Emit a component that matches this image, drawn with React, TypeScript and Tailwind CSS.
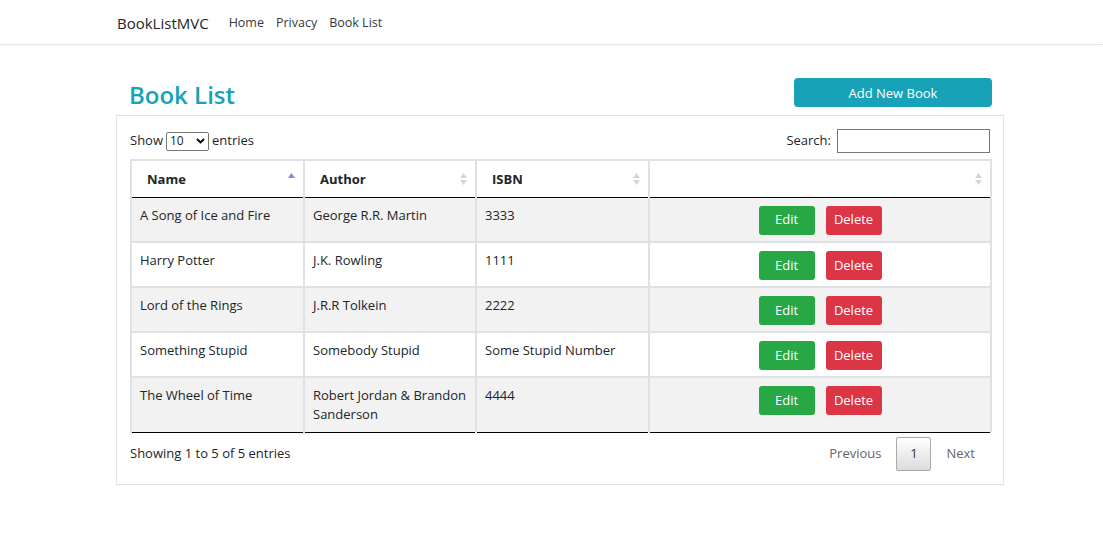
const books = [
  { name: "A Song of Ice and Fire", author: "George R.R. Martin", isbn: "3333" },
  { name: "Harry Potter", author: "J.K. Rowling", isbn: "1111" },
  { name: "Lord of the Rings", author: "J.R.R Tolkein", isbn: "2222" },
  { name: "Something Stupid", author: "Somebody Stupid", isbn: "Some Stupid Number" },
  { name: "The Wheel of Time", author: "Robert Jordan & Brandon Sanderson", isbn: "4444" },
];

const SortIcon = ({ active }: { active?: boolean }) => (
  <span className="absolute right-2 top-[12px] flex flex-col gap-[2px]">
    <svg width="7" height="5" viewBox="0 0 7 5">
      <path d="M3.5 0L7 5H0z" fill={active ? "#8a87d6" : "#d6d6d6"} />
    </svg>
    <svg width="7" height="5" viewBox="0 0 7 5">
      <path d="M0 0h7L3.5 5z" fill={active ? "transparent" : "#d6d6d6"} />
    </svg>
  </span>
);

const HeadCell = ({ label, active, className }: { label?: string; active?: boolean; className?: string }) => (
  <th className={`relative h-[37px] border-2 border-[#dee2e6] border-b-0 pl-[15px] pt-[2px] text-left font-bold text-[13px] text-[#212529] ${className ?? ""}`}>
    {label}
    <SortIcon active={active} />
  </th>
);

export default function App() {
  return (
    <div className="min-h-[557px] bg-white text-[13px] text-[#212529]" style={{ fontFamily: '"Open Sans", "Noto Sans", sans-serif' }}>
      <nav className="h-[45px] border-b border-[#e5e5e5] shadow-[0_1px_4px_rgba(0,0,0,0.06)]">
        <div className="ml-[116px] flex h-full w-[888px] items-center pt-[3px]">
          <span className="ml-[1px] mr-[20px] text-[15px] text-[#212529]">BookListMVC</span>
          <div className="flex gap-[12px] text-[12.5px] text-[#343a40]">
            <span>Home</span>
            <span>Privacy</span>
            <span>Book List</span>
          </div>
        </div>
      </nav>

      <div className="ml-[116px] w-[888px] pt-[33px]">
        <div className="flex items-end justify-between pl-3 pr-[12px]">
          <h2 className="pl-[1px] text-[24px] font-semibold leading-none text-[#17a2b8]">Book List</h2>
          <button className="h-[29px] w-[198px] rounded-[4px] bg-[#17a2b8] pt-[2px] text-[13px] text-white">Add New Book</button>
        </div>

        <div className="mt-[8px] border border-[#dee2e6] pb-[13px] pl-[13px] pr-[11px] pt-[13px]">
          <div className="flex items-center justify-between pr-[2px]">
            <div className="flex items-center gap-[3px]">
              <span>Show</span>
              <div className="flex h-[19px] w-[43px] items-center justify-between rounded-[2px] border border-[#767676] px-[3px] text-[12px]">
                <span>10</span>
                <svg width="9" height="6" viewBox="0 0 9 6">
                  <path d="M1 1l3.5 3.5L8 1" stroke="#000" strokeWidth="1.8" fill="none" />
                </svg>
              </div>
              <span>entries</span>
            </div>
            <div className="flex items-center gap-[6px]">
              <span>Search:</span>
              <div className="h-[24px] w-[153px] border border-[#767676]" />
            </div>
          </div>

          <table className="mt-[6px] w-full border-collapse">
            <thead>
              <tr className="border-b border-black">
                <HeadCell label="Name" active className="w-[173px]" />
                <HeadCell label="Author" className="w-[172px]" />
                <HeadCell label="ISBN" className="w-[173px]" />
                <HeadCell />
              </tr>
            </thead>
            <tbody>
              {books.map((b, i) => {
                const last = i === books.length - 1;
                const cell = `border-2 border-[#dee2e6] border-t-0 px-[8px] ${last ? "border-b-[1px] border-b-black" : ""}`;
                return (
                  <tr key={b.name} className={i % 2 === 0 ? "bg-[#f2f2f2]" : "bg-white"}>
                    <td className={`${cell} py-[8px] align-top leading-[19px]`}>{b.name}</td>
                    <td className={`${cell} py-[8px] align-top leading-[19px]`}>{b.author}</td>
                    <td className={`${cell} py-[8px] align-top leading-[19px]`}>{b.isbn}</td>
                    <td className={`${cell} h-[45px] pb-[6px] pt-[8px] align-top`}>
                      <div className="flex justify-center gap-[11px]">
                        <button className="h-[29px] w-[56px] rounded-[3px] bg-[#28a745] text-[13px] text-white">Edit</button>
                        <button className="h-[29px] w-[56px] rounded-[3px] bg-[#dc3545] text-[13px] text-white">Delete</button>
                      </div>
                    </td>
                  </tr>
                );
              })}
            </tbody>
          </table>

          <div className="mt-[4px] flex items-center justify-between pr-[2px]">
            <span>Showing 1 to 5 of 5 entries</span>
            <div className="flex items-center text-[#666]">
              <span className="px-[15px]">Previous</span>
              <span className="flex h-[34px] w-[35px] items-center justify-center rounded-[2px] border border-[#aaa] bg-gradient-to-b from-white to-[#dcdcdc] text-[#333]">1</span>
              <span className="px-[15px]">Next</span>
            </div>
          </div>
        </div>
      </div>
    </div>
  );
}
